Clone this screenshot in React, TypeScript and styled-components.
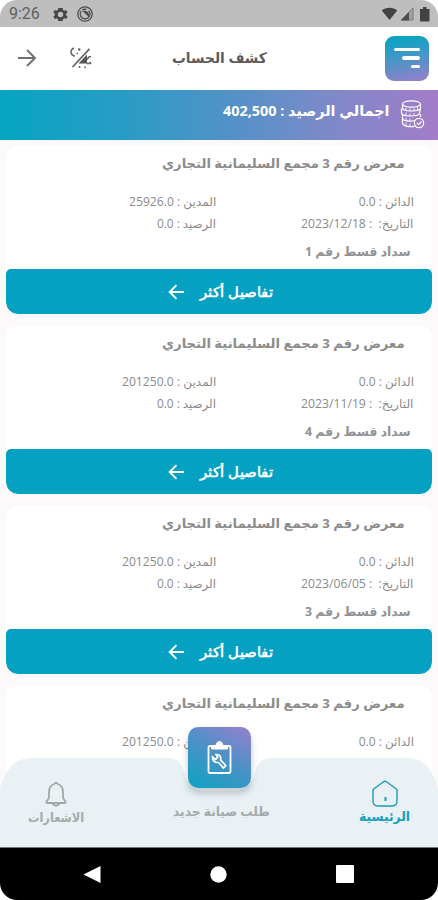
import React, { useLayoutEffect, useRef, useState } from "react";
import styled, { createGlobalStyle } from "styled-components";

const GlobalStyle = createGlobalStyle`
  * { box-sizing: border-box; }
  body { margin: 0; background: #fff; font-family: "Open Sans", "DejaVu Sans", sans-serif; }
  svg { display: block; flex: none; }
`;

const Phone = styled.div`
  width: 438px;
  height: 900px;
  overflow: hidden;
  border-radius: 17px;
  background: #fbf9fa;
  display: flex;
  flex-direction: column;
`;

const StatusBar = styled.header`
  height: 27px;
  flex: none;
  background: #bebebe;
  color: #606060;
  display: flex;
  align-items: center;
  padding: 1px 6px 0 9px;
`;
const Clock = styled.span`
  font: 16px/20px Roboto, sans-serif;
  width: 44px;
`;
const StatusIcons = styled.div`
  display: flex;
  gap: 9px;
  align-items: center;
`;
const SignalIcons = styled(StatusIcons)`
  margin-left: auto;
  gap: 2px;
`;

const AppBar = styled.div`
  height: 63px;
  flex: none;
  background: #fff;
  display: flex;
  align-items: center;
  padding: 0 9px 2px 17px;
`;
const BarActions = styled.div`
  display: flex;
  align-items: center;
  gap: 32px;
  color: #666;
  width: 155px;
`;
const MenuButton = styled.button`
  margin-left: auto;
  margin-top: 1px;
  width: 44px;
  height: 45px;
  border: 0;
  padding: 12px 9px 0 0;
  border-radius: 9px;
  background: linear-gradient(170deg, #13a2c3 15%, #5193c7 55%, #9181ca 95%);
  display: flex;
  flex-direction: column;
  align-items: flex-end;
  gap: 5px;
`;
const MenuLine = styled.span<{ $w: number }>`
  width: ${(p) => p.$w}px;
  height: 3.5px;
  border-radius: 2px;
  background: #fff;
`;

const Banner = styled.section`
  height: 50px;
  flex: none;
  direction: rtl;
  display: flex;
  align-items: flex-start;
  padding: 10px 13px 0;
  gap: 10px;
  background: linear-gradient(90deg, #05a4c3 0%, #299cc6 28%, #5192c7 52%, #7b8ac8 74%, #a37cc9 100%);
  color: #fff;
`;
const BannerText = styled.div`
  margin-top: -1px;
`;

const List = styled.main`
  flex: 1;
  min-height: 0;
  overflow: hidden;
  padding: 6px 6px 0;
  display: flex;
  flex-direction: column;
  gap: 12px;
`;
const Card = styled.article`
  height: 168px;
  flex: none;
  direction: rtl;
  background: #fff;
  border-radius: 10px 10px 12px 12px;
  overflow: hidden;
  display: flex;
  flex-direction: column;
`;
const CardBody = styled.div`
  flex: 1;
  padding: 6px 18px 0;
`;
const CardTitle = styled.div`
  padding-right: 9px;
  height: 39px;
`;
const Facts = styled.div`
  display: grid;
  grid-template-columns: 198px 1fr;
  grid-auto-rows: 22px;
`;
const Note = styled.div`
  padding: 6px 3px 0;
`;
const MoreButton = styled.button`
  height: 45px;
  border: 0;
  border-radius: 5px 5px 12px 12px;
  background: #04a1c2;
  color: #fff;
  display: flex;
  align-items: center;
  justify-content: center;
  gap: 15px;
  padding: 0 0 0 2px;
`;

const BottomNav = styled.nav`
  position: relative;
  height: 90px;
  flex: none;
  direction: rtl;
  display: grid;
  grid-template-columns: 107px 1fr 112px;
  background: #fbf9fa;
`;
const NavShape = styled.svg`
  position: absolute;
  inset: 0;
`;
const NavItem = styled.div<{ $color: string; $top: number }>`
  position: relative;
  display: flex;
  flex-direction: column;
  align-items: center;
  padding-top: ${(p) => p.$top}px;
  color: ${(p) => p.$color};
`;
const RequestButton = styled.button`
  position: absolute;
  left: 188px;
  top: -30px;
  width: 63px;
  height: 61px;
  border: 0;
  padding: 0;
  border-radius: 10px;
  background: linear-gradient(30deg, #16a0c3 8%, #4493c6 48%, #8d82cc 92%);
  box-shadow: 0 5px 7px rgba(70, 90, 100, 0.32);
  display: grid;
  place-items: center;
`;

const SystemBar = styled.footer`
  height: 53px;
  flex: none;
  background: #000;
  display: flex;
  justify-content: space-between;
  align-items: center;
  padding: 0 84px 0 83px;
  border-top: 1px solid #777;
`;

const TextFrame = styled.span<{ $w: number; $size: number; $weight: number; $color: string; $lh: number }>`
  display: block;
  flex: none;
  direction: rtl;
  text-align: right;
  width: ${(p) => p.$w}px;
  height: ${(p) => p.$lh}px;
  font-size: ${(p) => p.$size}px;
  line-height: ${(p) => p.$lh}px;
  font-weight: ${(p) => p.$weight};
  color: ${(p) => p.$color};
`;
const TextRun = styled.span`
  display: inline-block;
  white-space: pre;
  transform-origin: right center;
`;

type FitProps = { width: number; size: number; weight?: number; color?: string; lh?: number; children: string };

/* Condenses or widens a single line so that it fills its measure. */
function Fit({ width, size, weight = 400, color = "inherit", lh = 22, children }: FitProps) {
  const ref = useRef<HTMLSpanElement>(null);
  const [scale, setScale] = useState(1);
  useLayoutEffect(() => {
    if (ref.current) setScale(width / ref.current.offsetWidth);
  }, [width, size, children]);
  return (
    <TextFrame $w={width} $size={size} $weight={weight} $color={color} $lh={lh}>
      <TextRun ref={ref} style={{ transform: `scaleX(${scale})` }}>{children}</TextRun>
    </TextFrame>
  );
}

type EntryData = { debit: string; debitW: number; date?: string; no?: string };

const entries: EntryData[] = [
  { debit: "25926.0", debitW: 87, date: "2023/12/18", no: "1" },
  { debit: "201250.0", debitW: 94, date: "2023/11/19", no: "4" },
  { debit: "201250.0", debitW: 94, date: "2023/06/05", no: "3" },
  { debit: "201250.0", debitW: 94 },
];

const grey = "#8b8b8b";

function Entry({ debit, debitW, date, no }: EntryData) {
  return (
    <Card>
      <CardBody>
        <CardTitle>
          <Fit width={243} size={13} weight={700} color="#8c8c8c">معرض رقم 3 مجمع السليمانية التجاري</Fit>
        </CardTitle>
        <Facts>
          <Fit width={55} size={12} color={grey}>الدائن : 0.0</Fit>
          <Fit width={debitW} size={12} color={grey}>{`المدين : ${debit}`}</Fit>
          {date && <Fit width={113} size={12} color={grey}>{`التاريخ:  : ${date}`}</Fit>}
          {date && <Fit width={59} size={12} color={grey}>الرصيد : 0.0</Fit>}
        </Facts>
        {no && (
          <Note>
            <Fit width={106} size={12.5} weight={700} color="#929292">{`سداد قسط رقم ${no}`}</Fit>
          </Note>
        )}
      </CardBody>
      {date && (
        <MoreButton>
          <Fit width={73} size={14} weight={700}>تفاصيل أكثر</Fit>
          <svg width="17" height="16" viewBox="0 0 17 16" fill="none" stroke="#fff" strokeWidth="1.9">
            <path d="M16 8H2M8.500 1.200 1.700 8l6.800 6.800" />
          </svg>
        </MoreButton>
      )}
    </Card>
  );
}

export default function App() {
  return (
    <>
      <GlobalStyle />
      <Phone>
        <StatusBar>
          <Clock>9:26</Clock>
          <StatusIcons>
            <svg width="15" height="15" viewBox="2 2 20 20" fill="#474747">
              <path d="M19.400 13a7.500 7.500 0 0 0 0-2l2.100-1.600-2-3.500-2.500 1a7 7 0 0 0-1.700-1L15 3.200h-4-2l-.4 2.700a7 7 0 0 0-1.700 1l-2.500-1-2 3.500L4.600 11a7.500 7.500 0 0 0 0 2l-2.200 1.600 2 3.500 2.500-1a7 7 0 0 0 1.700 1l.4 2.700h6l.4-2.700a7 7 0 0 0 1.700-1l2.500 1 2-3.500zM12 15.600a3.600 3.600 0 1 1 0-7.200 3.600 3.600 0 0 1 0 7.200z" />
            </svg>
            <svg width="16" height="16" viewBox="0 0 16 16" fill="none" stroke="#4b4b4b" strokeWidth="1.300">
              <circle cx="8" cy="8" r="7.200" />
              <path d="M4.200 5.200a4.800 4.800 0 1 0 7.400-.5M5.500 3.700a5 5 0 0 1 4-.3" />
              <path d="M5 4.600 12 11V8.500C11.500 5.500 8 4 5 4.600z" fill="#4b4b4b" stroke="none" />
            </svg>
          </StatusIcons>
          <SignalIcons>
            <svg width="17" height="14" viewBox="0 0 17 14"><path d="M.8 3.500C5-.2 12-.2 16.200 3.500L8.500 13z" fill="#424242" /></svg>
            <svg width="14" height="14" viewBox="0 0 14 14"><path d="M1 13 13 1v12z" fill="#a2a2a2" stroke="#777" /><path d="M1 13.500 9 5v8.500z" fill="#4b4b4b" /></svg>
            <svg width="16" height="15" viewBox="0 0 16 15"><path d="M4 2h3V0h3.500v2h3v12.500H4z" fill="#424242" /></svg>
          </SignalIcons>
        </StatusBar>

        <AppBar>
          <BarActions>
            <svg width="20" height="20" viewBox="0 0 20 20" fill="none" stroke="#6f6f6f" strokeWidth="1.900"><path d="M1 10h17M10 2l8 8-8 8" /></svg>
            <svg width="24" height="24" viewBox="0 0 24 24" fill="none" stroke="#666" strokeWidth="1.600">
              <path d="M3.500 21 20.500 2.800" strokeWidth="1.800" />
              <path d="M5 2C.5 4 1.500 9.500 6 10" />
              <path d="M9 3.500h2.500M10.200 2.200v2.600M7.500 7.500h1.500" strokeWidth="1.400" />
              <path d="M9.500 17.500 18 8.500v9z" fill="#555" stroke="none" />
              <path d="M17.500 17.500h3M18 13.500l2-2.500 2-.5M10.500 20v2M16 20.500v1.700M20.500 16l1.500 2" />
            </svg>
          </BarActions>
          <Fit width={95} size={14.5} weight={600} color="#5c5c5c">كشف الحساب</Fit>
          <MenuButton aria-label="القائمة">
            <MenuLine $w={26} />
            <MenuLine $w={18} />
            <MenuLine $w={9} />
          </MenuButton>
        </AppBar>

        <Banner>
          <svg width="25" height="29" viewBox="0 0 25 29" fill="none" stroke="#fff" strokeWidth="1.200">
            <ellipse cx="11.500" cy="4" rx="9" ry="3.200" />
            <path d="M2.500 4v4c0 4 18 4 18 0V4M1.500 9v4c0 4 18 4 18 0l1-4M2.500 14v4c0 3 7 4 12 2.500M20.500 17v-3M2.500 19v4c0 3 6 4.200 12 3.300M2.500 8l-1 1.500M1.500 13l1 1.500M2.500 18v2" />
            <path d="M6 7.500v3M10 8.500v3M14 8.200v3M17.500 7v3M6 12.500v3M10 13.500v3M14 13.200v3M6 17.500v3M10 18.500v3M6 22.500v3M10 23.500v3" strokeWidth=".8" />
            <circle cx="19" cy="23" r="4.700" />
            <path d="m17 23 1.600 1.700 3-3.200" />
          </svg>
          <BannerText>
            <Fit width={167} size={15} weight={700}>اجمالي الرصيد : 402,500</Fit>
          </BannerText>
        </Banner>

        <List>
          {entries.map((e, i) => <Entry key={i} {...e} />)}
        </List>

        <BottomNav>
          <NavShape width="438" height="90" viewBox="0 0 438 90">
            <path d="M6 0H432V40H6Z" fill="#fff" />
            <path d="M0 90V32Q8 1 31 1H169Q180 1 184 15Q188 34 207 34H233Q251 34 255 15Q258 1 270 1H409Q430 1 438 32V90Z" fill="#e9f1f4" />
          </NavShape>
          <NavItem $color="#13a0c0" $top={23}>
            <svg width="28" height="27" viewBox="0 0 28 27" fill="none" stroke="#189bbb" strokeWidth="1.400">
              <path d="M2 9.500 12.500 1.700q1.500-1 3 0L26 9.500V21q0 5-5 5H7q-5 0-5-5z" />
              <path d="M14.500 17v4" strokeWidth="2" />
            </svg>
            <Fit width={51} size={13} weight={700} lh={18}>الرئيسية</Fit>
          </NavItem>
          <NavItem $color="#a5aaac" $top={45}>
            <Fit width={97} size={13} weight={700} lh={18}>طلب صيانة جديد</Fit>
          </NavItem>
          <NavItem $color="#a5aaac" $top={24}>
            <svg width="24" height="27" viewBox="0 0 24 27" fill="none" stroke="#a1a6a8" strokeWidth="1.800">
              <path d="M10 3Q12 .5 14 3Q19 5 19 11v5q0 2 2.500 4.500.8 1.500-1 1.500h-17q-1.800 0-1-1.500Q5 18 5 16v-5Q5 5 10 3ZM8.500 22.500q3.500 4.500 7 0" />
            </svg>
            <Fit width={56} size={13} weight={700} lh={18}>الاشعارات</Fit>
          </NavItem>
          <RequestButton aria-label="طلب صيانة جديد">
            <svg width="25" height="35" viewBox="0 0 25 35" fill="none" stroke="#fff" strokeWidth="1.800">
              <rect x="1.500" y="6" width="22" height="27" rx="1.500" />
              <path d="M4.500 9V6H9q.5-4.500 3.500-4.500T16 6h4.500v3z" fill="#fff" strokeWidth="1" />
              <path d="M9 14.500q4-.3 4.800 3.500l-.2 2 5.200 5.600-2.500 2.400-4.700-5.500q-5 .3-6-3.500l-.1-2 3 2.500 2.300-2.300z" strokeWidth="1.700" />
            </svg>
          </RequestButton>
        </BottomNav>

        <SystemBar>
          <svg width="18" height="19" viewBox="0 0 18 19"><path d="M17.500 1v17L.5 9.500z" fill="#fff" /></svg>
          <svg width="17" height="17" viewBox="0 0 17 17"><circle cx="8.500" cy="8.500" r="8.200" fill="#fff" /></svg>
          <svg width="18" height="18" viewBox="0 0 18 18"><rect width="18" height="18" rx="1" fill="#fff" /></svg>
        </SystemBar>
      </Phone>
    </>
  );
}
